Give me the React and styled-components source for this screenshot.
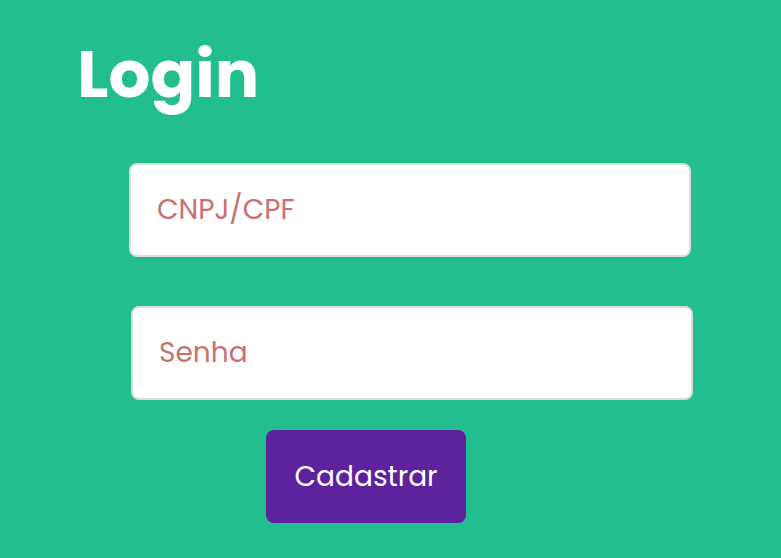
import React from "react";
import styled, { createGlobalStyle } from "styled-components";

const GlobalStyle = createGlobalStyle`
  html, body {
    margin: 0;
    padding: 0;
    background-color: #23be8f;
    font-family: "Poppins", Inter, "Noto Sans", sans-serif;
  }
  * {
    box-sizing: border-box;
  }
`;

const App = () => {
  return (
    <>
      <GlobalStyle />
      <Page>
        <Title>Login</Title>
        <Form onSubmit={(e) => e.preventDefault()}>
          <Input type="text" placeholder="CNPJ/CPF" />
          <Input type="password" placeholder="Senha" $shift={2} />
          <Button type="submit">Cadastrar</Button>
        </Form>
      </Page>
    </>
  );
};

export default App;

const Page = styled.div`
  width: 781px;
  height: 558px;
  overflow: hidden;
  padding: 28px 0 0 77px;
`;

const Title = styled.h1`
  margin: 0;
  color: #ffffff;
  font-size: 66px;
  font-weight: 700;
  line-height: 92px;
`;

const Form = styled.form`
  display: flex;
  flex-direction: column;
  align-items: flex-start;
  gap: 49px;
  margin-top: 43px;
  padding-left: 52px;
`;

const Input = styled.input`
  width: 562px;
  height: 94px;
  margin-left: ${({ $shift }) => $shift || 0}px;
  padding: 0 26px;
  background: #ffffff;
  border: 2px solid #dcdcdc;
  border-radius: 8px;
  outline: none;
  font-family: inherit;
  font-size: 28px;
  color: #333;

  &::placeholder {
    color: #c87270;
  }
`;

const Button = styled.button`
  width: 200px;
  height: 93px;
  margin: -19px 0 0 137px;
  background-color: #5e229e;
  color: #ffffff;
  border: none;
  border-radius: 8px;
  font-family: inherit;
  font-size: 28px;
  cursor: pointer;
`;
